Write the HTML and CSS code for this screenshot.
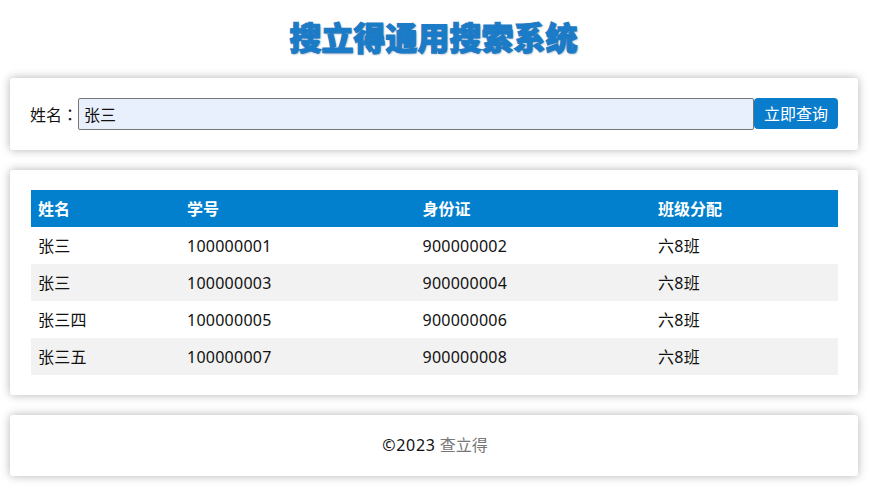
FILE: index.html
```html
<!DOCTYPE html>
<html lang="zh-CN">
<head>
<meta charset="utf-8">
<title>搜立得通用搜索系统</title>
<link rel="stylesheet" href="styles.css">
</head>
<body>
<h1 class="title">搜立得通用搜索系统</h1>
<form class="card search">
  <label class="search-label" for="name">姓名<span class="colon" lang="zh-TW">：</span></label>
  <input class="search-input" id="name" type="text" value="张三">
  <button class="search-btn" type="button">立即查询</button>
</form>
<section class="card results">
  <table class="table">
    <colgroup><col class="c1"><col class="c2"><col class="c3"><col class="c4"></colgroup>
    <thead><tr><th>姓名</th><th>学号</th><th>身份证</th><th>班级分配</th></tr></thead>
    <tbody>
      <tr><td>张三</td><td>100000001</td><td>900000002</td><td>六8班</td></tr>
      <tr><td>张三</td><td>100000003</td><td>900000004</td><td>六8班</td></tr>
      <tr><td>张三四</td><td>100000005</td><td>900000006</td><td>六8班</td></tr>
      <tr><td>张三五</td><td>100000007</td><td>900000008</td><td>六8班</td></tr>
    </tbody>
  </table>
</section>
<footer class="card footer"><span class="copy">©2023</span> <a class="footer-link" href="#">查立得</a></footer>
</body>
</html>
```
FILE: styles.css
```css
* { box-sizing: border-box; }
html, body { height: 100%; }
body {
  margin: 0;
  padding: 0 11px 0 10px;
  background: #fff;
  color: #111;
  font: 16px/1.5 "Noto Sans", "Noto Sans CJK SC", sans-serif;
  overflow: hidden;
}
.title {
  margin: 0;
  height: 78px;
  padding: 14px 1px 0 0;
  text-align: center;
  font-size: 32px;
  line-height: 48px;
  font-weight: 900;
  color: #1a7cc8;
  -webkit-text-stroke: 1.2px #1f7bc4;
  text-shadow: 1px 1px 2px rgba(60, 100, 140, .6);
}
.card {
  display: block;
  background: #fff;
  border-radius: 3px;
  box-shadow: 0 0 10px rgba(0, 0, 0, .3);
  margin-bottom: 20px;
}
.search {
  display: flex;
  align-items: flex-start;
  height: 72px;
  padding: 20px 20px 0;
}
.search-label { white-space: nowrap; flex: none; line-height: 32px; }
.colon { font-family: "Noto Sans CJK TC", sans-serif; }
.search-input {
  flex: 1;
  min-width: 0;
  height: 32px;
  padding: 0 5px;
  border: 1px solid #767676;
  border-radius: 2px;
  background: #e8f0fe;
  color: #111;
  font: inherit;
}
.search-btn {
  flex: none;
  width: 84px;
  height: 31px;
  padding: 0;
  border: 0;
  border-radius: 4px;
  background: #0a7ccc;
  color: #fff;
  font: inherit;
}
.results { padding: 20px 20px 20px 21px; }
.table { width: 100%; border-collapse: collapse; table-layout: fixed; }
.c1 { width: 149px; }
.c2 { width: 235.5px; }
.c3 { width: 235.5px; }
.table th, .table td {
  height: 37px;
  padding: 0 7px;
  text-align: left;
  font-size: 16px;
  line-height: 24px;
}
.table th { background: #0280ce; color: #fff; font-weight: 700; }
.table td { color: #111; letter-spacing: .25px; }
.table tbody tr:nth-child(even) td { background: #f2f2f2; }
.footer {
  height: 61px;
  margin-bottom: 0;
  padding-left: 2px;
  line-height: 61px;
  text-align: center;
}
.copy { letter-spacing: .7px; }
.footer-link { color: #777; text-decoration: none; }
```
